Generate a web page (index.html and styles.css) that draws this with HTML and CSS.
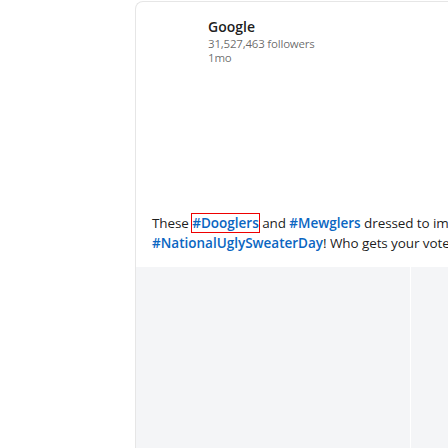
FILE: index.html
```html
<!DOCTYPE html>
<html>
<head>
<meta charset="utf-8">
<link rel="stylesheet" href="styles.css">
</head>
<body>
<div class="page">
  <div class="card">
    <div class="header">
      <div class="avatar"></div>
      <div class="meta">
        <div class="name">Google</div>
        <div class="sub">31,527,463 followers</div>
        <div class="sub">1mo</div>
      </div>
    </div>
    <p class="post">These <a class="tag focus">#Dooglers</a> and <a class="tag">#Mewglers</a> dressed to impress for<br><a class="tag">#NationalUglySweaterDay</a>! Who gets your vote?</p>
    <div class="media">
      <div class="img"></div>
      <div class="img"></div>
    </div>
  </div>
</div>
</body>
</html>
```
FILE: styles.css
```css
html, body {
  margin: 0;
  padding: 0;
  background: #fff;
  overflow: hidden;
}
.page {
  width: 448px;
  height: 448px;
  overflow: hidden;
  padding-left: 135px;
  padding-top: 1px;
  box-sizing: border-box;
  font-family: "Open Sans", "Noto Sans", sans-serif;
}
.card {
  width: 600px;
  height: 500px;
  border: 1px solid #e6e6e6;
  border-right: none;
  border-radius: 8px 0 0 0;
  background: #fff;
}
.header {
  display: flex;
  gap: 8px;
  padding: 15px 16px 0;
}
.avatar {
  width: 48px;
  height: 48px;
}
.name {
  font-size: 14px;
  font-weight: 600;
  line-height: 20px;
  color: rgba(0,0,0,0.9);
}
.sub {
  font-size: 11.5px;
  line-height: 14px;
  color: rgba(0,0,0,0.6);
  letter-spacing: -0.2px;
}
.post {
  margin: 148px 0 0;
  padding: 0 16px;
  font-size: 13.5px;
  line-height: 20px;
  color: rgba(0,0,0,0.9);
  white-space: nowrap;
  letter-spacing: -0.1px;
}
.tag {
  color: #0a66c2;
  font-weight: 600;
  letter-spacing: 0;
}
.focus {
  outline: 1px solid #e00;
}
.media {
  display: flex;
  gap: 1px;
  margin-top: 14px;
}
.img {
  width: 274px;
  height: 200px;
  background: #f4f5f7;
}
```
